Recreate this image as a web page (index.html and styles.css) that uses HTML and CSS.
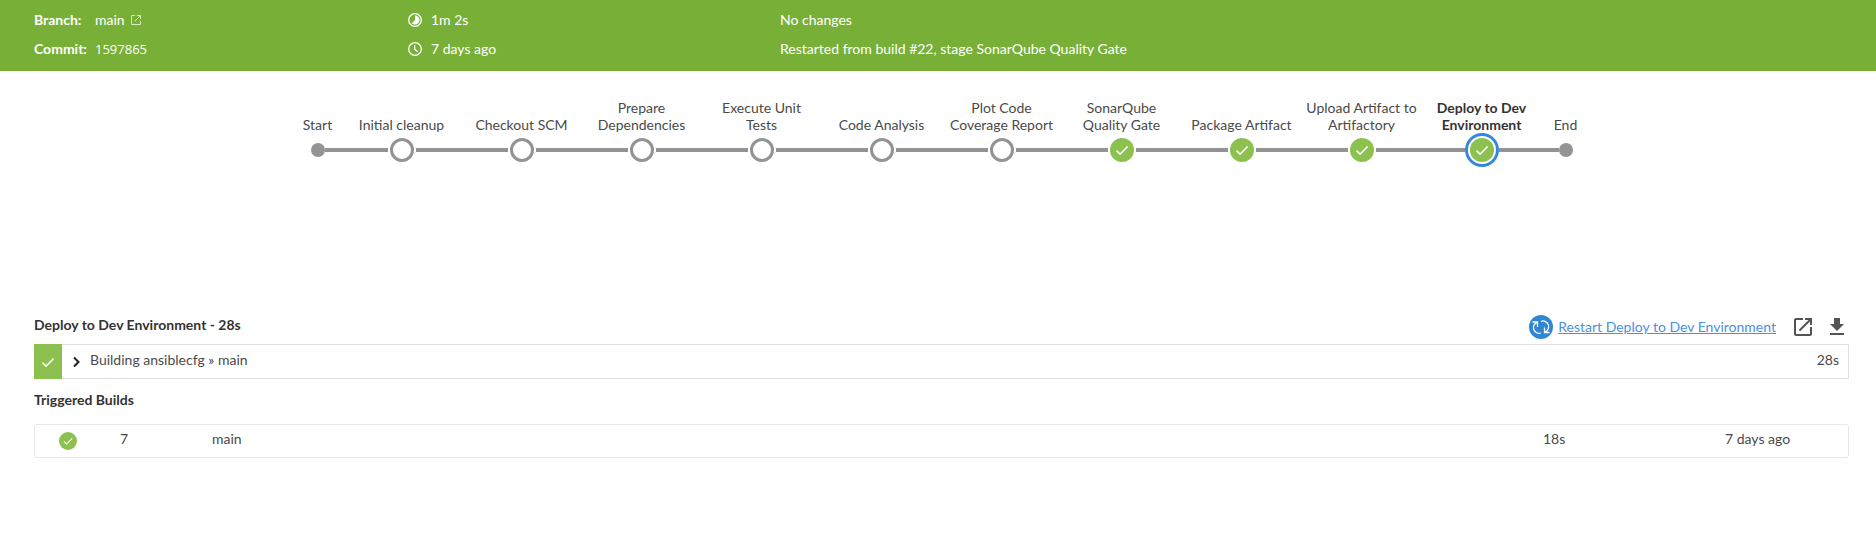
FILE: index.html
```html
<!DOCTYPE html>
<html lang="en">
<head>
<meta charset="utf-8">
<title>Pipeline run</title>
<link rel="stylesheet" href="styles.css">
</head>
<body>
<svg class="symbols" aria-hidden="true">
  <symbol id="open" viewBox="0 0 24 24"><path d="M19 19H5V5h7V3H5a2 2 0 0 0-2 2v14a2 2 0 0 0 2 2h14c1.100 0 2-.9 2-2v-7h-2v7zM14 3v2h3.590l-9.830 9.830 1.410 1.410L19 6.410V10h2V3h-7z"/></symbol>
  <symbol id="check" viewBox="0 0 24 24"><path d="M6.500 12.600l3.600 3.500 7.500-7.700" fill="none" stroke="#fff" stroke-width="1.500"/></symbol>
</svg>
<header class="summary">
  <dl class="details">
    <dt>Branch:</dt>
    <dd><a class="branch" href="#branch">main <svg class="icon-small" viewBox="0 0 12 12"><path d="M5 1.500H1.500v9h9V7M7 1.500h3.500V5M10.500 1.500l-6 6"/></svg></a></dd>
    <dt>Commit:</dt>
    <dd class="hash">1597865</dd>
  </dl>
  <div class="times">
    <p><svg class="icon-time" viewBox="0 0 16 16"><circle cx="8" cy="8" r="6.300"/><path class="solid" d="M8 3.500a4.500 4.500 0 1 1-3.200 7.700L8 8z"/></svg>1m 2s</p>
    <p><svg class="icon-time" viewBox="0 0 16 16"><circle cx="8" cy="8" r="6.300"/><path d="M7.700 4v4.200l3 2.600"/></svg>7 days ago</p>
  </div>
  <div class="causes">
    <p>No changes</p>
    <p>Restarted from build #22, stage SonarQube Quality Gate</p>
  </div>
</header>
<main>
  <ol class="pipeline">
    <li class="stage end first"><span class="label">Start</span><span class="track"><i class="dot"></i></span></li>
    <li class="stage"><span class="label">Initial cleanup</span><span class="track"><i class="node"></i></span></li>
    <li class="stage"><span class="label">Checkout SCM</span><span class="track"><i class="node"></i></span></li>
    <li class="stage"><span class="label">Prepare Dependencies</span><span class="track"><i class="node"></i></span></li>
    <li class="stage"><span class="label">Execute Unit Tests</span><span class="track"><i class="node"></i></span></li>
    <li class="stage"><span class="label">Code Analysis</span><span class="track"><i class="node"></i></span></li>
    <li class="stage"><span class="label">Plot Code Coverage Report</span><span class="track"><i class="node"></i></span></li>
    <li class="stage"><span class="label">SonarQube Quality Gate</span><span class="track"><i class="node passed"><svg><use href="#check"/></svg></i></span></li>
    <li class="stage"><span class="label">Package Artifact</span><span class="track"><i class="node passed"><svg><use href="#check"/></svg></i></span></li>
    <li class="stage"><span class="label">Upload Artifact to Artifactory</span><span class="track"><i class="node passed"><svg><use href="#check"/></svg></i></span></li>
    <li class="stage selected"><span class="label">Deploy to Dev Environment</span><span class="track"><i class="node passed"><svg><use href="#check"/></svg></i></span></li>
    <li class="stage end last"><span class="label">End</span><span class="track"><i class="dot"></i></span></li>
  </ol>
  <section>
    <div class="heading">
      <h2>Deploy to Dev Environment - 28s</h2>
      <a class="restart" href="#restart"><svg class="icon" viewBox="0 0 24 24"><circle cx="12" cy="12" r="12" fill="#2f86d3"/><g fill="none" stroke="#fff" stroke-width="1.300"><path d="M3.500 7h5v5M8.200 7.300a5.600 5.600 0 0 0 3.800 10.700M20.500 17.500h-5v-5M15.800 17.200A5.600 5.600 0 0 0 12 6.300"/></g></svg><span>Restart Deploy to Dev Environment</span></a>
      <a class="tool" href="#log" aria-label="Open log"><svg class="icon"><use href="#open"/></svg></a>
      <a class="tool" href="#download" aria-label="Download log"><svg class="icon" viewBox="0 0 24 24"><path d="M19 9h-4V3H9v6H5l7 7 7-7zM5 18v2h14v-2H5z"/></svg></a>
    </div>
    <button class="step" type="button">
      <span class="step-status"><svg class="icon"><use href="#check"/></svg></span>
      <svg class="chevron" viewBox="0 0 12 12"><path d="M4 1.500L8.500 6 4 10.500"/></svg>
      <span class="step-name">Building ansiblecfg » main</span>
      <span class="step-time">28s</span>
    </button>
    <h2 class="triggered">Triggered Builds</h2>
    <div class="builds">
      <table>
        <tr>
          <td class="status"><svg viewBox="0 0 24 24"><circle cx="12" cy="12" r="12" fill="#8cc04f"/><use href="#check"/></svg></td>
          <td class="number">7</td>
          <td>main</td>
          <td class="duration">18s</td>
          <td class="age">7 days ago</td>
        </tr>
      </table>
    </div>
  </section>
</main>
</body>
</html>
```
FILE: styles.css
```css
* { box-sizing: border-box; }
body { margin: 0; background: #fff; color: #4a4a4a; font: 14px/20px Lato, sans-serif; }
p, h2, dl, dd, ol { margin: 0; padding: 0; }
svg { display: block; flex: none; }
.symbols { position: absolute; width: 0; height: 0; }
.icon { width: 24px; height: 24px; }

.summary {
  display: grid;
  grid-template-columns: 81fr 81fr 238fr;
  padding: 10px 0 12px 34px;
  background: #78b037;
  color: #fff;
}
.details { display: grid; grid-template-columns: 61px 1fr; row-gap: 9px; }
.details dt { font-weight: 700; }
.hash { font: 13px/20px "Open Sans", sans-serif; }
.branch { display: inline-flex; align-items: center; gap: 5px; color: inherit; text-decoration: none; }
.icon-small { width: 12px; height: 12px; fill: none; stroke: #d4e9bc; }
.times, .causes { display: grid; row-gap: 9px; }
.times p { display: flex; align-items: center; gap: 8px; }
.icon-time { width: 16px; height: 16px; fill: none; stroke: #fff; stroke-width: 1.3; }
.icon-time .solid { fill: #fff; stroke: none; }

main { padding: 28px 27px 0 34px; }
.pipeline { display: flex; justify-content: center; height: 212px; list-style: none; }
.stage { display: flex; flex-direction: column; width: 120px; }
.stage.end { width: 48px; }
.label {
  display: flex; align-items: flex-end; justify-content: center;
  height: 34px; padding: 0 4px; line-height: 17px; text-align: center;
}
.selected .label { color: #333; font-weight: 700; }
.track { display: flex; align-items: center; height: 34px; }
.track::before, .track::after { content: ""; flex: 1; height: 4px; background: #949393; }
.first .track::before, .last .track::after { background: none; }
.dot { width: 14px; height: 14px; border-radius: 50%; background: #949393; }
.node { width: 24px; height: 24px; margin: 0 2px; border: 3px solid #949393; border-radius: 50%; }
.node.passed { border: 0; background: #8cc04f; }
.node svg { width: 24px; height: 24px; }
.selected .node { margin: 0 5px; box-shadow: 0 0 0 2px #fff, 0 0 0 5px #3487dc; }

h2 { color: #333; font-size: 14px; line-height: 20px; font-weight: 700; }
.heading { display: flex; align-items: center; height: 33px; padding-bottom: 2px; }
.heading h2 { flex: 1; padding-bottom: 4px; }
.restart { display: flex; align-items: center; gap: 5px; margin-right: 15px; color: #4a90e2; }
.tool { fill: #545454; }
.tool + .tool { margin-left: 10px; }
.step {
  display: flex; align-items: center; width: 100%; height: 35px;
  padding: 0 9px 0 0; border: 1px solid #dfdfe2; border-left: 0; background: #fff;
  color: inherit; font: inherit; text-align: left;
}
.step-status { display: flex; align-items: center; justify-content: center; width: 28px; height: 35px; background: #8cc04f; }
.chevron { width: 12px; height: 12px; margin: 0 8px; fill: none; stroke: #222; stroke-width: 2; }
.step-name { flex: 1; padding-bottom: 3px; }
.step-time { padding-bottom: 3px; }
.triggered { margin: 11px 0 14px; }
.builds { border: 1px solid #e6e6ec; border-radius: 3px; }
table { width: 100%; border-collapse: collapse; table-layout: fixed; }
td { height: 32px; padding: 0 0 4px; }
.status { width: 85px; padding: 0 0 0 24px; }
.status svg { width: 18px; height: 18px; }
.number { width: 92px; }
.duration { width: 182px; }
.age { width: 123px; }
```
